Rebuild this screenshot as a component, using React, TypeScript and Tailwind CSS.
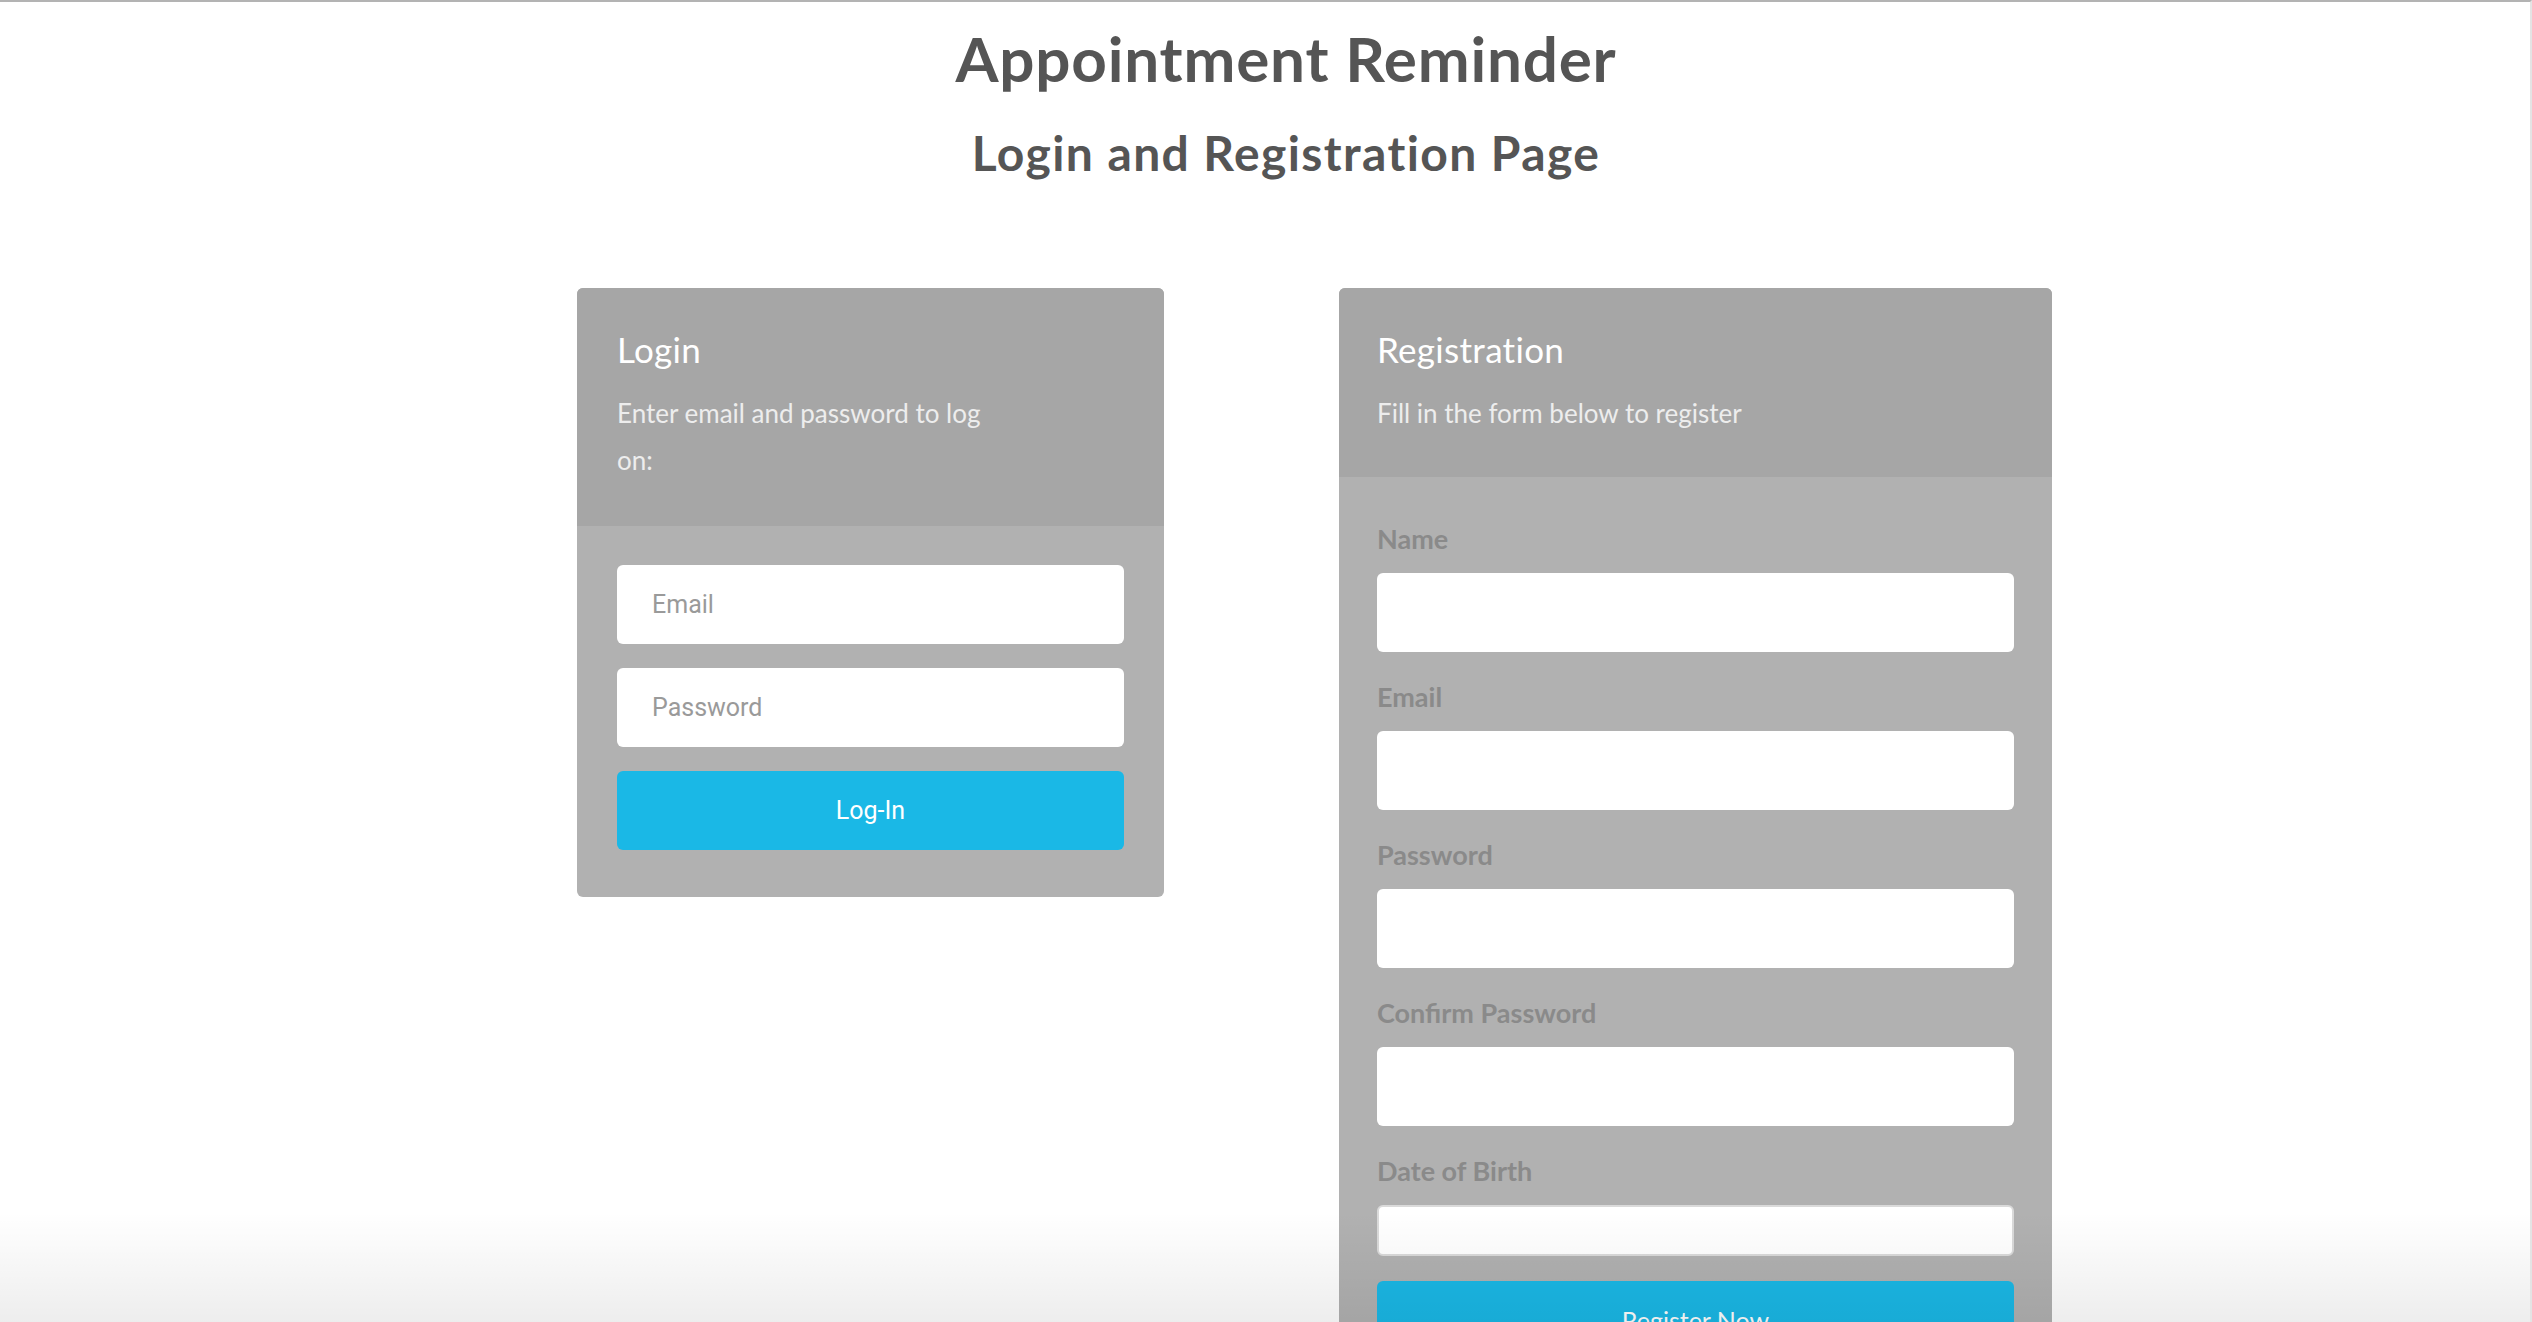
import React from 'react';

const serif = { fontFamily: 'Lato, "Open Sans", sans-serif' };
const roboto = { fontFamily: 'Roboto, "Liberation Sans", sans-serif' };

function LoginCard() {
  return (
    <div className="w-[587px] shrink-0 rounded-md overflow-hidden bg-[#b1b1b1]">
      <div className="bg-[#a6a6a6] px-[40px] pt-[41px] pb-[42px]">
        <h3 className="text-[35px] leading-[40px] tracking-[0.3px] text-white">Login</h3>
        <p className="mt-[21px] max-w-[392px] text-[26px] leading-[47px] text-[#ededed]">
          Enter email and password to log on:
        </p>
      </div>
      <div className="px-[40px] pt-[39px] pb-[47px] flex flex-col gap-[24px]">
        <input
          type="text"
          placeholder="Email"
          className="h-[79px] w-full rounded-md bg-white px-[35px] text-[25px] text-[#555] placeholder:text-[#9a9a9a] outline-none"
          style={roboto}
        />
        <input
          type="password"
          placeholder="Password"
          className="h-[79px] w-full rounded-md bg-white px-[35px] text-[25px] text-[#555] placeholder:text-[#9a9a9a] outline-none"
          style={roboto}
        />
        <button
          className="h-[79px] w-full rounded-md bg-[#1ab8e6] text-[25px] text-white"
          style={roboto}
        >
          Log-In
        </button>
      </div>
    </div>
  );
}

function Field({ label, type = 'text' }: { label: string; type?: string }) {
  return (
    <div className="mb-[30px]">
      <label className="block text-[27px] leading-[30px] font-bold text-[#8a8a8a] mb-[19px]">{label}</label>
      <input type={type} className="block h-[79px] w-full rounded-md bg-white px-[30px] text-[25px] outline-none" />
    </div>
  );
}

function RegistrationCard() {
  return (
    <div className="w-[713px] shrink-0 rounded-t-md overflow-hidden bg-[#b1b1b1]">
      <div className="bg-[#a6a6a6] px-[38px] pt-[41px] pb-[40px]">
        <h3 className="text-[35px] leading-[40px] tracking-[0.3px] text-white">Registration</h3>
        <p className="mt-[21px] text-[26px] leading-[47px] text-[#ededed]">Fill in the form below to register</p>
      </div>
      <div className="px-[38px] pt-[47px] pb-[40px]">
        <Field label="Name" />
        <Field label="Email" />
        <Field label="Password" type="password" />
        <Field label="Confirm Password" type="password" />
        <div className="mb-[25px]">
          <label className="block text-[27px] leading-[30px] font-bold text-[#8a8a8a] mb-[19px]">Date of Birth</label>
          <div className="h-[51px] w-full rounded-md bg-white border-2 border-[#dadada]" />
        </div>
        <button className="h-[79px] w-full rounded-md bg-[#1ab8e6] text-[25px] text-white">Register Now</button>
      </div>
    </div>
  );
}

export default function App() {
  return (
    <div className="relative h-screen overflow-hidden bg-white border-t-2 border-t-[#b3b3b3] border-r-2 border-r-[#e4e4e4]" style={serif}>
      <div className="pl-[42px] text-center text-[#555555]">
        <h1 className="pt-[25px] text-[62px] leading-[62px] tracking-[0.8px] font-bold">Appointment Reminder</h1>
        <h2 className="mt-[40px] text-[48px] leading-[48px] tracking-[1.4px] font-bold">Login and Registration Page</h2>
      </div>
      <div className="mt-[111px] flex items-start gap-[175px] pl-[577px]">
        <LoginCard />
        <RegistrationCard />
      </div>
      <div className="pointer-events-none absolute inset-x-0 bottom-0 h-[110px] bg-gradient-to-b from-transparent to-black/[0.07]" />
    </div>
  );
}
